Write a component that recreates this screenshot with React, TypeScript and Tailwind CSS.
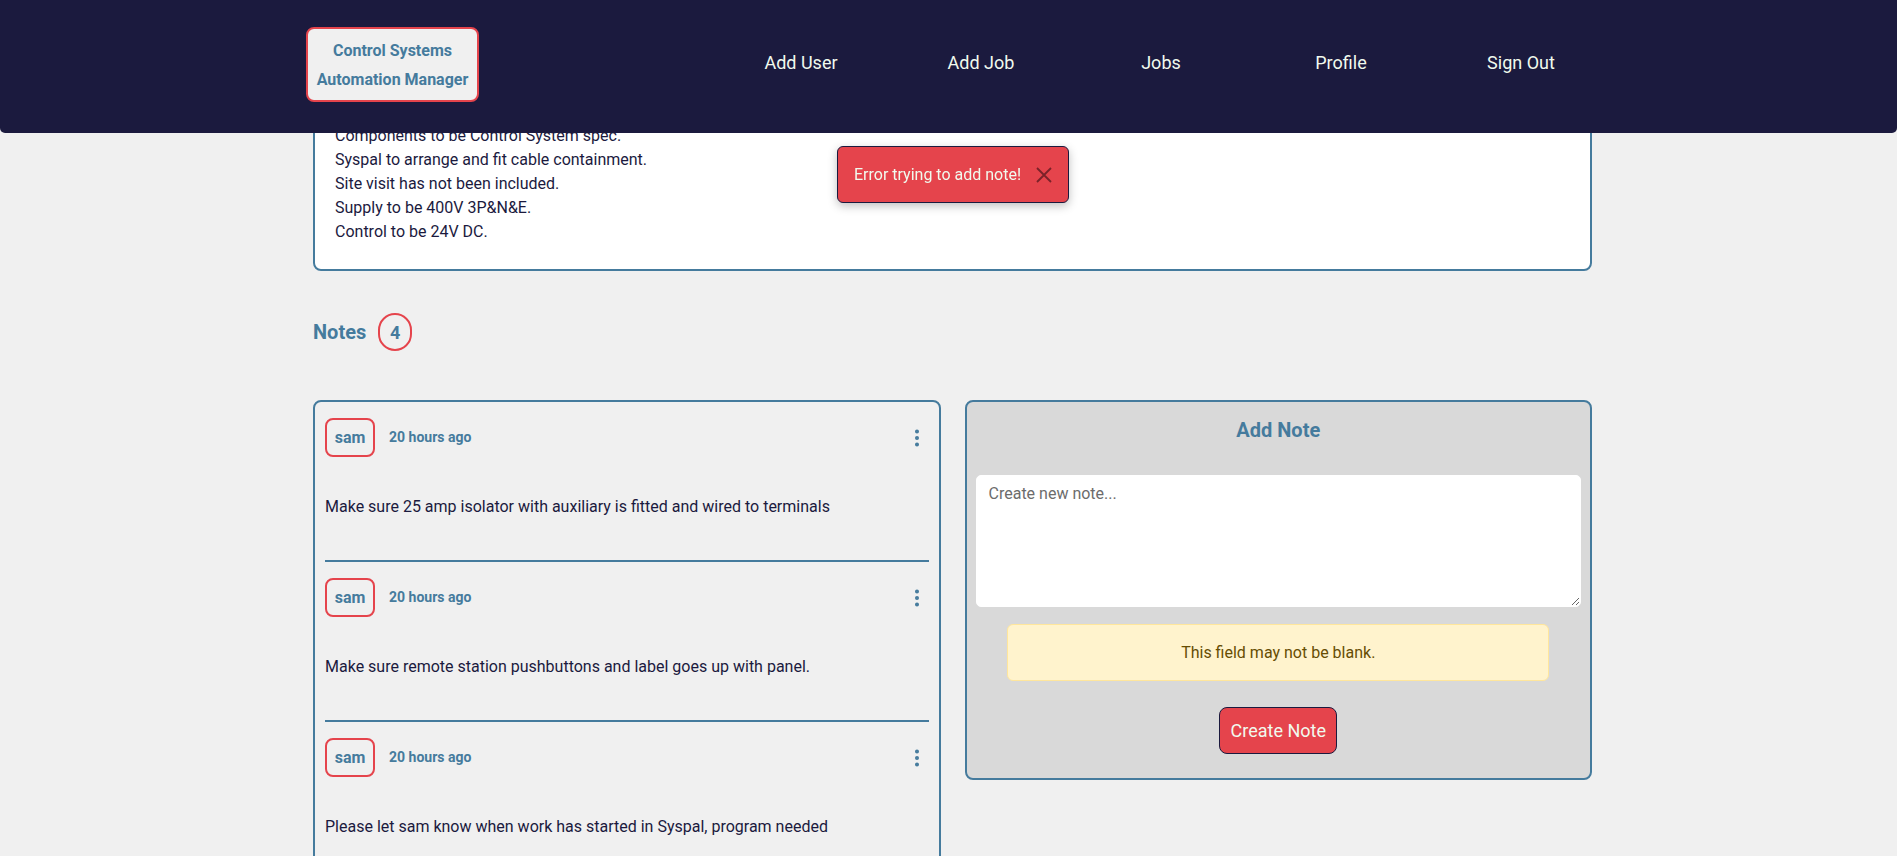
import { EllipsisVertical } from "lucide-react";

const navLinks = ["Add User", "Add Job", "Jobs", "Profile", "Sign Out"];

const specLines = [
  "Panel to be wall mounted in plant room.",
  "Components to be Control System spec.",
  "Syspal to arrange and fit cable containment.",
  "Site visit has not been included.",
  "Supply to be 400V 3P&N&E.",
  "Control to be 24V DC.",
];

const notes = [
  "Make sure 25 amp isolator with auxiliary is fitted and wired to terminals",
  "Make sure remote station pushbuttons and label goes up with panel.",
  "Please let sam know when work has started in Syspal, program needed",
  "Drawings to be sent over for approval before build starts.",
];

function NoteItem({ text, last }: { text: string; last: boolean }) {
  return (
    <div className="px-[10px]">
      <div className="flex items-center h-[39px]">
        <span className="w-[50px] h-[39px] flex items-center justify-center rounded-lg border-2 border-[#e5444c] text-[16px] font-bold text-[#457b9d]">
          sam
        </span>
        <span className="ml-[14px] text-[14px] font-bold text-[#457b9d]">
          20 hours ago
        </span>
        <button className="ml-auto mr-[1px] text-[#457b9d]">
          <EllipsisVertical size={22} strokeWidth={2.4} />
        </button>
      </div>
      <p className="mt-[38px] mb-[41px] text-[16px] leading-6 text-[#1b1a3e]">
        {text}
      </p>
      {!last && <div className="h-[2px] bg-[#457b9d] mb-[16px]" />}
    </div>
  );
}

export default function App() {
  return (
    <div className="min-h-screen bg-[#f0f0f0] font-['Roboto',sans-serif] text-[#1b1a3e] overflow-hidden">
      <header className="fixed top-0 inset-x-0 h-[133px] bg-[#1b1a3e] rounded-b-[5px] z-10">
        <div className="flex items-start pl-[306px]">
          <div className="mt-[27px] w-[173px] h-[75px] flex flex-col items-center justify-center rounded-lg border-2 border-[#e5444c] bg-[#f0f0f0] text-[16px] font-bold leading-[29px] text-[#457b9d]">
            <span>Control Systems</span>
            <span>Automation Manager</span>
          </div>
          <nav className="ml-[232px] mt-[51px] flex">
            {navLinks.map((l) => (
              <a
                key={l}
                className="w-[180px] text-center text-[18px] leading-6 text-[#f1faee]"
              >
                {l}
              </a>
            ))}
          </nav>
        </div>
      </header>

      <div className="fixed top-[146px] left-[837px] w-[232px] h-[57px] flex items-center justify-between pl-4 pr-[16px] rounded-md border border-[#1b1a3e] bg-[#e5444c] shadow-[0_3px_10px_rgba(0,0,0,0.25)] z-20">
        <span className="text-[16px] text-[#f1faee]">Error trying to add note!</span>
        <svg width="16" height="16" viewBox="0 0 16 16" className="text-[#7a2229]">
          <path d="M1 1 15 15M15 1 1 15" stroke="currentColor" strokeWidth="1.8" fill="none" />
        </svg>
      </div>

      <main className="ml-[313px] w-[1279px] pt-[81px] pb-10">
        <section className="bg-white border-2 border-[#457b9d] rounded-lg pl-5 pt-[17px] pb-[25px] text-[16px] leading-6">
          {specLines.map((l) => (
            <p key={l}>{l}</p>
          ))}
        </section>

        <div className="mt-[42px] flex items-center gap-3">
          <h2 className="text-[20px] font-bold text-[#457b9d]">Notes</h2>
          <span className="w-[34px] h-[38px] flex items-center justify-center rounded-full border-2 border-[#e5444c] text-[18px] font-bold text-[#457b9d]">
            4
          </span>
        </div>

        <div className="mt-[49px] grid grid-cols-2 gap-6 items-start">
          <div className="border-2 border-[#457b9d] rounded-lg pt-4">
            {notes.map((n, i) => (
              <NoteItem key={i} text={n} last={i === notes.length - 1} />
            ))}
          </div>

          <div className="border-2 border-[#457b9d] rounded-lg bg-[#d9d9d9] px-[9px] pt-[13px] pb-6 flex flex-col items-center">
            <h3 className="text-[20px] leading-[30px] font-bold text-[#457b9d]">
              Add Note
            </h3>
            <textarea
              placeholder="Create new note..."
              className="mt-[30px] w-full h-[132px] rounded-[5px] bg-white border border-white px-3 py-[6px] text-[16px] leading-6 placeholder:text-[#6c6c6c] outline-none"
            />
            <div className="mt-[17px] w-[542px] h-[57px] flex items-center justify-center rounded-md border border-[#ffe69c] bg-[#fff3cd] text-[16px] text-[#664d03]">
              This field may not be blank.
            </div>
            <button className="mt-[26px] w-[118px] h-[47px] rounded-lg border border-[#1b1a3e] bg-[#e5444c] text-[18px] text-[#f1faee]">
              Create Note
            </button>
          </div>
        </div>
      </main>
    </div>
  );
}
